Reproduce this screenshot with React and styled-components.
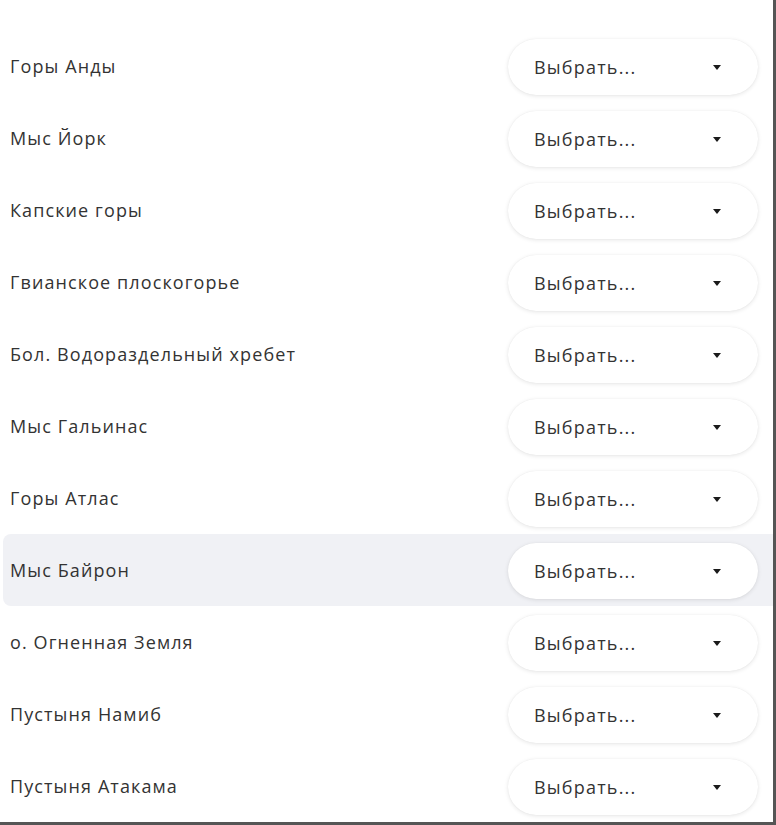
import React from 'react'
import styled, { createGlobalStyle } from 'styled-components'

const GlobalStyle = createGlobalStyle`
  html, body {
    margin: 0;
    padding: 0;
    background: #ffffff;
  }
`

const Frame = styled.div`
  width: 776px;
  height: 825px;
  box-sizing: border-box;
  padding-top: 30px;
  border-right: 3px solid #555555;
  border-bottom: 3px solid #555555;
  overflow: hidden;
  display: flex;
  flex-direction: column;
`

const Row = styled.div`
  height: 72px;
  flex-shrink: 0;
  margin-left: 3px;
  padding: 0 15px 0 7px;
  display: flex;
  align-items: center;
  justify-content: space-between;
  border-radius: 8px 0 0 8px;
  background: ${p => (p.active ? '#f0f1f5' : 'transparent')};
`

const Label = styled.span`
  font-family: 'Open Sans', 'Noto Sans', sans-serif;
  font-size: 18px;
  letter-spacing: 1.1px;
  color: #333333;
`

const SelectButton = styled.div`
  width: 250px;
  height: 56px;
  box-sizing: border-box;
  border-radius: 28px;
  background: #ffffff;
  box-shadow: 0 1px 4px rgba(0, 0, 0, 0.1), 0 0 1px rgba(0, 0, 0, 0.08);
  display: flex;
  align-items: center;
  justify-content: space-between;
  padding: 0 37px 0 26px;
  margin-top: 2px;
  font-family: 'Open Sans', 'Noto Sans', sans-serif;
  font-size: 18px;
  letter-spacing: 1.2px;
  color: #333333;
`

const Caret = () => (
  <svg width="8" height="5" viewBox="0 0 8 5">
    <path d="M0 0 L8 0 L4 5 Z" fill="#1a1a1a" />
  </svg>
)

const items = [
  'Горы Анды',
  'Мыс Йорк',
  'Капские горы',
  'Гвианское плоскогорье',
  'Бол. Водораздельный хребет',
  'Мыс Гальинас',
  'Горы Атлас',
  'Мыс Байрон',
  'о. Огненная Земля',
  'Пустыня Намиб',
  'Пустыня Атакама',
]

export default function App() {
  return (
    <>
      <GlobalStyle />
      <Frame>
        {items.map((name, i) => (
          <Row key={name} active={i === 7}>
            <Label>{name}</Label>
            <SelectButton>
              <span>Выбрать...</span>
              <Caret />
            </SelectButton>
          </Row>
        ))}
      </Frame>
    </>
  )
}
